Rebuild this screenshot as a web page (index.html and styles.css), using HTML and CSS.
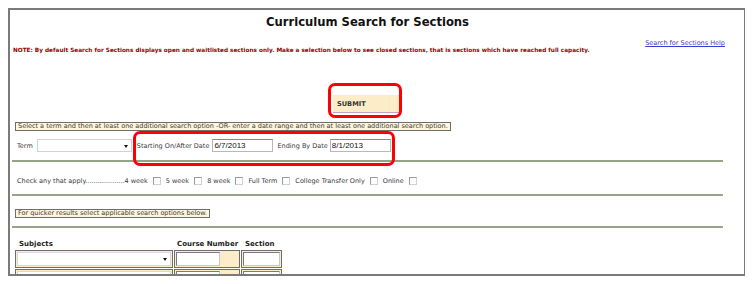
FILE: index.html
```html
<!DOCTYPE html>
<html lang="en">
<head>
  <meta charset="UTF-8">
  <meta name="viewport" content="width=device-width, initial-scale=1.0">
  <title>Curriculum Search for Sections</title>
  <link rel="stylesheet" href="styles.css">
</head>
<body>

<div id="frame">
  <div id="page">
    <h1>Curriculum Search for Sections</h1>

    <div class="noticeRow">
      <p class="note">NOTE: By default Search for Sections displays open and waitlisted sections only. Make a selection below to see closed sections, that is sections which have reached full capacity.</p>
      <a href="#" class="help">Search for Sections Help</a>
    </div>

    <div class="submitRow">
      <button type="button" class="submit">SUBMIT</button>
    </div>

    <div class="hint">Select a term and then at least one additional search option -OR- enter a date range and then at least one additional search option.</div>

    <div class="termRow">
      <label class="termLabel">Term</label>
      <div class="select termSelect"></div>
      <label class="startLabel">Starting On/After Date</label>
      <input type="text" class="date" value="6/7/2013">
      <label class="endLabel">Ending By Date</label>
      <input type="text" class="date" value="8/1/2013">
    </div>

    <hr>

    <div class="checkRow">
      <span class="first">Check any that apply...................4 week</span><input type="checkbox">
      <span>5 week</span><input type="checkbox">
      <span>8 week</span><input type="checkbox">
      <span>Full Term</span><input type="checkbox">
      <span>College Transfer Only</span><input type="checkbox">
      <span>Online</span><input type="checkbox">
    </div>

    <hr>

    <div class="hint">For quicker results select applicable search options below.</div>

    <hr>

    <div class="courseGrid">
      <div class="head subjHead">Subjects</div>
      <div class="head">Course Number</div>
      <div class="head secHead">Section</div>

      <div class="cell"><div class="select subjSelect"></div></div>
      <div class="cell"><input type="text" class="field courseField"></div>
      <div class="cell"><input type="text" class="field secField"></div>

      <div class="cell"><div class="select subjSelect"></div></div>
      <div class="cell"><input type="text" class="field courseField"></div>
      <div class="cell"><input type="text" class="field secField"></div>
    </div>
  </div>

  <!-- red highlight marks drawn over the form -->
  <div class="mark markSubmit"></div>
  <div class="mark markDates"></div>
</div>

</body>
</html>
```

FILE: styles.css
```css
body {
  margin: 8px;
  background-color: #fff;
  font-family: "DejaVu Sans", Verdana, sans-serif;
  color: #3a3a3a;
}

#frame {
  position: relative;
  width: 738px;
  height: 268px;
  box-sizing: border-box;
  border: 2px solid #7a7a7a;
  overflow: hidden;
}

#page {
  width: 711px;
  margin-left: 2px;
}

h1 {
  margin: 5px 0 0;
  font-size: 11.6px;
  line-height: 14px;
  text-align: center;
  color: #111;
}

.noticeRow {
  display: flex;
  justify-content: space-between;
  align-items: flex-start;
  height: 14px;
  margin-top: 10px;
}

.note {
  margin: 7px 0 0 1px;
  font-size: 5.75px;
  line-height: 8px;
  font-weight: bold;
  color: #990000;
  white-space: nowrap;
}

.help {
  margin-right: -2px;
  font-size: 6.5px;
  line-height: 8px;
  color: #3340cc;
  white-space: nowrap;
}

.submitRow {
  display: flex;
  justify-content: center;
  margin-top: 42px;
}

.submit {
  width: 66px;
  height: 18px;
  margin: 0 3px 0 0;
  padding: 0 0 0 4px;
  border: 0;
  border-bottom: 1px solid #c3a3c3;
  background-color: #fdecc8;
  font-family: "DejaVu Sans", Verdana, sans-serif;
  font-size: 6.6px;
  font-weight: bold;
  color: #333;
  text-align: left;
}

.hint {
  width: fit-content;
  margin: 9px 0 0 3px;
  padding: 0 2px;
  border: 1px solid #6e6e6e;
  background-color: #fff6dc;
  font-size: 6.5px;
  line-height: 7px;
  white-space: nowrap;
}

.termRow {
  display: flex;
  align-items: center;
  height: 13px;
  margin-top: 8px;
  font-size: 6.5px;
}

.termLabel {
  margin: 0 4px 0 5px;
}

.select {
  position: relative;
  box-sizing: border-box;
  background-color: #fff;
  border: 1px solid #d2d2d2;
}

.select::after {
  content: "";
  position: absolute;
  right: 3px;
  top: 50%;
  margin-top: -1px;
  border-left: 2.5px solid transparent;
  border-right: 2.5px solid transparent;
  border-top: 3px solid #111;
}

.termSelect {
  width: 95px;
  height: 13px;
}

.startLabel {
  margin: 0 3px 0 5px;
}

.endLabel {
  margin: 0 2px 0 4px;
}

.date {
  width: 61px;
  height: 13px;
  box-sizing: border-box;
  margin: 0;
  padding: 0 1px;
  border: 1px solid #b8b8b8;
  border-top-color: #8a8a8a;
  font-family: "Liberation Sans", Arial, sans-serif;
  font-size: 8px;
  color: #111;
}

hr {
  height: 2px;
  margin: 8px 0 0;
  border: 0;
  background-color: #95a386;
}

.checkRow {
  display: flex;
  align-items: center;
  height: 8px;
  margin-top: 15px;
  font-size: 6.5px;
  line-height: 8px;
  white-space: nowrap;
}

.checkRow .first {
  margin-left: 5px;
}

.checkRow input {
  appearance: none;
  width: 8px;
  height: 8px;
  box-sizing: border-box;
  margin: 0 5px 0 5px;
  border: 1px solid #9a9a9a;
  border-right-color: #d0d0d0;
  border-bottom-color: #d0d0d0;
  background-color: #fff;
}

.checkRow + hr {
  margin-top: 9px;
}

hr + .hint {
  margin-top: 13px;
}

.courseGrid {
  display: grid;
  grid-template-columns: 158px 66px 41px;
  grid-template-rows: 9px 18px 18px;
  column-gap: 1px;
  row-gap: 1px;
  margin: 12px 0 0 3px;
}

.head {
  font-size: 7px;
  line-height: 9px;
  font-weight: bold;
  color: #222;
  padding-left: 3px;
}

.subjHead,
.secHead {
  padding-left: 4px;
}

.cell {
  box-sizing: border-box;
  padding: 1px;
  border: 1px solid #6e6e6e;
  background-color: #fdecc8;
}

.subjSelect {
  height: 14px;
  border-color: #d8d8d8;
}

.field {
  display: block;
  height: 14px;
  box-sizing: border-box;
  margin: 0;
  padding: 0;
  border: 1px solid #c8c8c8;
  border-top-color: #7a7a7a;
  border-left-color: #7a7a7a;
  background-color: #fff;
}

.courseField {
  width: 44px;
}

.secField {
  width: 100%;
}

.mark {
  position: absolute;
  box-sizing: border-box;
  border: 3px solid #ff0000;
  border-radius: 7px;
}

.markSubmit {
  left: 318px;
  top: 73px;
  width: 74px;
  height: 35px;
}

.markDates {
  left: 123px;
  top: 121px;
  width: 262px;
  height: 35px;
}
```
